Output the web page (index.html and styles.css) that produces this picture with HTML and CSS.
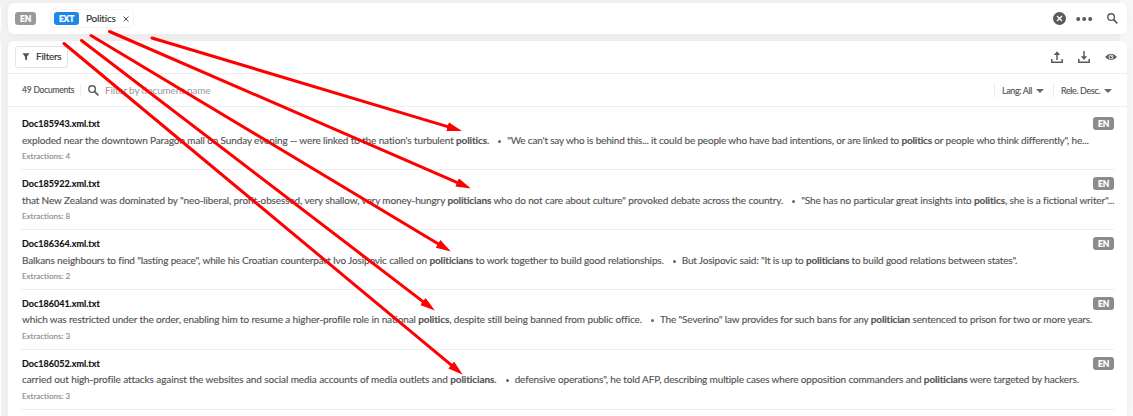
FILE: index.html
```html
<!DOCTYPE html>
<html lang="en">
<head>
<meta charset="utf-8">
<title>Documents</title>
<link rel="stylesheet" href="styles.css">
</head>
<body>
<div class="app">
  <aside class="edge"><div class="edge-top"></div><div class="edge-main"></div></aside>
  <main class="main">
    <header class="search">
      <span class="badge faded">EN</span>
      <div class="chip"><span class="badge ext">EXT</span><span class="chip-name">Politics</span>
        <svg class="close" width="6" height="6" viewBox="0 0 6 6"><path d="M.5.5l5 5M5.5.5l-5 5" stroke="#555" stroke-width="1"/></svg>
      </div>
      <div class="search-actions">
        <svg width="13" height="13" viewBox="0 0 13 13"><circle cx="6.5" cy="6.5" r="6.5" fill="#5a5a5a"/><path d="M4 4l5 5M9 4l-5 5" stroke="#fff" stroke-width="1.4"/></svg>
        <svg class="dots" width="17" height="5" viewBox="0 0 17 5" fill="#5a5a5a"><circle cx="2.2" cy="2" r="2"/><circle cx="8.2" cy="2" r="2"/><circle cx="14.2" cy="2" r="2"/></svg>
        <svg class="find" width="11" height="11" viewBox="0 0 11 11" fill="none" stroke="#5a5a5a"><circle cx="4.1" cy="4.1" r="3.3" stroke-width="1.4"/><path d="M6.6 6.6l3.7 3.7" stroke-width="1.7"/></svg>
      </div>
    </header>
    <section class="panel">
      <div class="toolbar">
        <button class="filters"><svg width="8" height="8" viewBox="0 0 8 8"><path d="M.5.3h7L5 3.8v3.7L3 6.2V3.8z" fill="#555"/></svg><span>Filters</span></button>
        <div class="tools">
          <svg width="12" height="12" viewBox="0 0 12 12" fill="none" stroke="#5a5a5a" stroke-width="1.5"><path d="M.8 8v3.2h10.4V8M6 9V2"/><path d="M2.8 4L6 .2 9.2 4z" fill="#5a5a5a" stroke="none"/></svg>
          <svg width="12" height="12" viewBox="0 0 12 12" fill="none" stroke="#5a5a5a" stroke-width="1.5"><path d="M.8 8v3.2h10.4V8M6 0v6"/><path d="M2.8 5.2L6 9l3.2-3.8z" fill="#5a5a5a" stroke="none"/></svg>
          <svg width="12" height="8" viewBox="0 0 12 8"><path d="M0 4Q6-2.4 12 4 6 10.4 0 4z" fill="#5a5a5a"/><circle cx="6" cy="4" r="2" fill="#5a5a5a" stroke="#fff" stroke-width=".9"/><circle cx="6.5" cy="3.5" r=".6" fill="#fff"/></svg>
        </div>
      </div>
      <div class="query">
        <span class="count">49 Documents</span>
        <label class="name-filter"><svg width="11" height="11" viewBox="0 0 11 11" fill="none" stroke="#5a5a5a"><circle cx="4.1" cy="4.1" r="3.3" stroke-width="1.4"/><path d="M6.6 6.6l3.8 3.8" stroke-width="1.7"/></svg><span>Filter by document name</span></label>
        <div class="select lang"><span>Lang: All</span><i class="caret"></i></div>
        <div class="select sort"><span>Rele. Desc.</span><i class="caret"></i></div>
      </div>
      <div class="list">
        <article class="doc d1"><div class="head"><h2>Doc185943.xml.txt</h2><span class="badge">EN</span></div>
          <p><span class="a">exploded near the downtown Paragon mall on Sunday evening -- were linked to the nation's turbulent <b>politics</b>.</span><i class="dot"></i><span class="b">"We can't say who is behind this... it could be people who have bad intentions, or are linked to <b>politics</b> or people who think differently", he...</span></p>
          <small>Extractions: 4</small></article>
        <article class="doc d2"><div class="head"><h2>Doc185922.xml.txt</h2><span class="badge">EN</span></div>
          <p><span class="a">that New Zealand was dominated by "neo-liberal, profit-obsessed, very shallow, very money-hungry <b>politicians</b> who do not care about culture" provoked debate across the country.</span><i class="dot"></i><span class="b">"She has no particular great insights into <b>politics</b>, she is a fictional writer"...</span></p>
          <small>Extractions: 8</small></article>
        <article class="doc d3"><div class="head"><h2>Doc186364.xml.txt</h2><span class="badge">EN</span></div>
          <p><span class="a">Balkans neighbours to find "lasting peace", while his Croatian counterpart Ivo Josipovic called on <b>politicians</b> to work together to build good relationships.</span><i class="dot"></i><span class="b">But Josipovic said: "It is up to <b>politicians</b> to build good relations between states".</span></p>
          <small>Extractions: 2</small></article>
        <article class="doc d4"><div class="head"><h2>Doc186041.xml.txt</h2><span class="badge">EN</span></div>
          <p><span class="a">which was restricted under the order, enabling him to resume a higher-profile role in national <b>politics</b>, despite still being banned from public office.</span><i class="dot"></i><span class="b">The "Severino" law provides for such bans for any <b>politician</b> sentenced to prison for two or more years.</span></p>
          <small>Extractions: 3</small></article>
        <article class="doc d5"><div class="head"><h2>Doc186052.xml.txt</h2><span class="badge">EN</span></div>
          <p><span class="a">carried out high-profile attacks against the websites and social media accounts of media outlets and <b>politicians</b>.</span><i class="dot"></i><span class="b">defensive operations", he told AFP, describing multiple cases where opposition commanders and <b>politicians</b> were targeted by hackers.</span></p>
          <small>Extractions: 3</small></article>
      </div>
    </section>
  </main>
</div>
<svg class="arrows" width="1133" height="416" viewBox="0 0 1133 416">
  <defs><marker id="tip" markerUnits="userSpaceOnUse" markerWidth="15" markerHeight="10" refX="1" refY="4.5" orient="auto"><path d="M0 0l15 4.5L0 9z" fill="#f00"/></marker></defs>
  <g stroke="#f00" stroke-width="3" stroke-linecap="round">
    <path d="M152 38L448.5 126.9" marker-end="url(#tip)"/>
    <path d="M109.5 31.5L458 182.8" marker-end="url(#tip)"/>
    <path d="M91 35.5L438.9 244.3" marker-end="url(#tip)"/>
    <path d="M81.5 40.5L423.7 302.1" marker-end="url(#tip)"/>
    <path d="M64 43.5L452 365.7" marker-end="url(#tip)"/>
  </g>
</svg>
</body>
</html>
```
FILE: styles.css
```css
* { box-sizing: border-box; }
body { margin: 0; height: 416px; overflow: hidden; background: #f1f1f1; font-family: Lato, sans-serif; font-size: 10px; color: #555; }
svg { display: block; flex: none; }
.app { display: flex; height: 416px; padding-right: 6px; background: linear-gradient(90deg, #f1f1f1 1120px, #f7f7f7 1120px); }
.edge { width: 1px; margin-right: 7px; display: flex; flex-direction: column; gap: 12px; padding-top: 6px; }
.edge-top { height: 24px; background: #fff; }
.edge-main { flex: 1; background: #fff; }
.main { flex: 1; min-width: 0; display: flex; flex-direction: column; gap: 7px; padding-top: 3px; }
.search { height: 31px; flex: none; background: #fff; border-radius: 6px; display: flex; align-items: center; padding: 0 9px 0 7px; box-shadow: 0 1px 8px #0000000a; }
.badge { width: 21px; height: 13px; flex: none; border-radius: 3px; background: #8b8b8b; color: #fff; font: 900 8.5px/14px Lato, sans-serif; letter-spacing: -.2px; text-align: center; -webkit-text-stroke: .2px; }
.faded { background: #999; }
.ext { width: 25px; background: #1b87e6; }
.chip { height: 19px; margin-left: 14px; padding: 0 4px 0 3px; display: flex; align-items: center; border: 1px solid #f5f5f5; border-radius: 4px; width: 84px; }
.chip-name { margin-left: 7px; color: #333; font-size: 10px; line-height: 12px; margin-top: -1px; letter-spacing: -.2px; flex: 1; white-space: nowrap; -webkit-text-stroke: .15px; }
.search-actions { margin-left: auto; display: flex; align-items: center; }
.dots { margin-left: 10px; margin-top: 1px; }
.find { margin-left: 14px; }
.panel { flex: 1; background: #fff; border-radius: 6px 6px 0 0; box-shadow: 0 1px 8px #0000000a; }
.toolbar { height: 33px; border-bottom: 1px solid #eee; display: flex; align-items: center; justify-content: space-between; padding: 0 10px 0 7px; }
.filters { height: 22px; width: 53px; margin: 0; padding: 0 0 1px 6px; background: #fff; border: 1px solid #e4e4e4; border-radius: 3px; display: flex; align-items: center; gap: 6px; color: #333; font: 10px/12px Lato, sans-serif; letter-spacing: -.25px; -webkit-text-stroke: .15px; }
.filters span { margin-top: -1px; }
.tools { display: flex; align-items: center; gap: 15px; }
.query { height: 33px; border-bottom: 1px solid #eee; display: flex; align-items: center; padding: 0 14px; }
.count { width: 59px; height: 12px; font-size: 8.5px; letter-spacing: -.22px; line-height: 13px; border-right: 1px solid #eee; white-space: nowrap; -webkit-text-stroke: .15px; }
.name-filter { display: flex; align-items: center; gap: 6px; margin-left: 7px; color: #999; letter-spacing: -.16px; }
.select { display: flex; align-items: center; justify-content: space-between; height: 15px; border-left: 1px solid #eee; padding-left: 7px; font-size: 9px; letter-spacing: -.38px; white-space: nowrap; -webkit-text-stroke: .15px; }
.lang { margin-left: auto; width: 51px; }
.sort { margin-left: 8px; width: 60px; }
.caret { border: 4px solid transparent; border-top-color: #666; border-bottom: 0; margin: 1px 1px 0 0; }
.list { padding: 3px 13px; }
.doc { height: 60px; border-bottom: 1px solid #eee; padding: 7px 0 0 1px; }
.head { display: flex; justify-content: space-between; height: 14px; }
h2 { margin: 0; font-size: 9px; line-height: 14px; color: #111; font-weight: 700; -webkit-text-stroke: .15px; }
p { margin: 1px 0 0; height: 16px; line-height: 16px; display: flex; white-space: nowrap; -webkit-text-stroke: .15px; }
.dot { width: 3px; height: 3px; flex: none; margin: 8px 6px 0 9px; background: #666; border-radius: 50%; }
small { display: block; margin-top: 2px; font-size: 8px; line-height: 12px; color: #8c8c8c; -webkit-text-stroke: .15px; }
.d4 p, .d5 p { margin-top: 0; }
.d4 small, .d5 small { margin-top: 3px; }
.d1 .a { letter-spacing: -.125px; }
.d1 .b { letter-spacing: -.178px; }
.d2 .a { letter-spacing: -.119px; }
.d2 .b { letter-spacing: -.125px; }
.d3 .a { letter-spacing: -.142px; }
.d3 .b { letter-spacing: -.175px; }
.d4 .a { letter-spacing: -.118px; }
.d4 .b { letter-spacing: -.15px; }
.d5 .a { letter-spacing: -.09px; }
.d5 .b { letter-spacing: -.133px; }
.arrows { position: absolute; top: 0; left: 0; }
```
